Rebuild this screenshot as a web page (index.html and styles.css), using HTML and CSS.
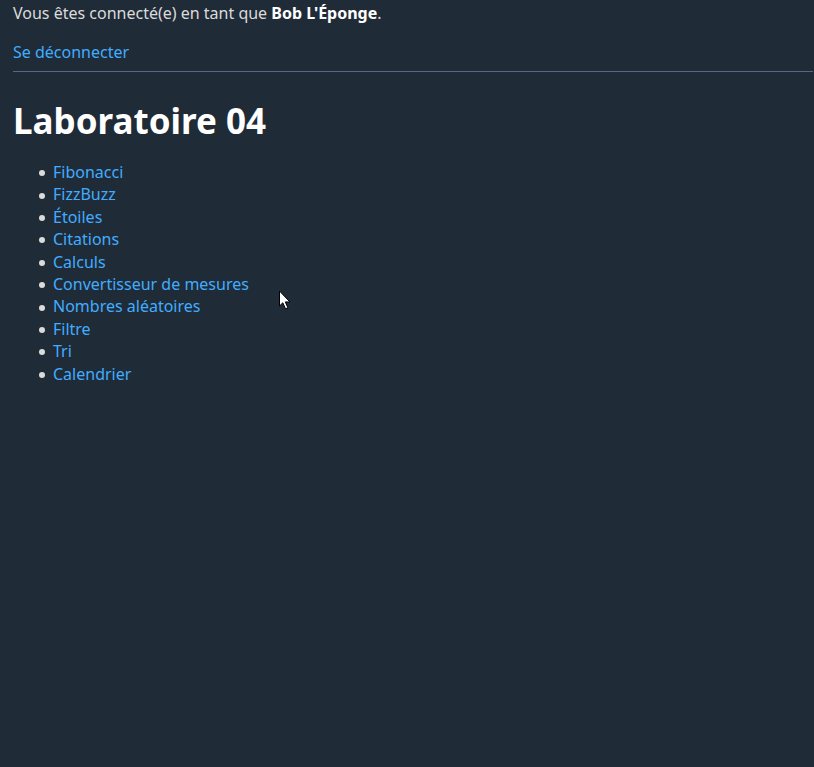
FILE: index.html
```html
<!DOCTYPE html>
<html lang="fr">
<head>
<meta charset="utf-8">
<title>Laboratoire 04</title>
<link rel="stylesheet" href="styles.css">
</head>
<body>
<header class="session">
<p class="user">Vous êtes connecté(e) en tant que <strong>Bob L'Éponge</strong>.</p>
<a href="#">Se déconnecter</a>
</header>
<main>
<h1>Laboratoire 04</h1>
<ul class="exercises">
<li><a href="#">Fibonacci</a></li>
<li><a href="#">FizzBuzz</a></li>
<li><a href="#">Étoiles</a></li>
<li><a href="#">Citations</a></li>
<li><a href="#">Calculs</a></li>
<li><a href="#">Convertisseur de mesures</a></li>
<li><a href="#">Nombres aléatoires</a></li>
<li><a href="#">Filtre</a></li>
<li><a href="#">Tri</a></li>
<li><a href="#">Calendrier</a></li>
</ul>
</main>
<svg class="pointer" width="12" height="20" viewBox="0 0 12 20" aria-hidden="true"><path d="M.5 1v15l3.3-3.2 2.7 6 2.4-1-2.6-5.9h4.6z" fill="#fff" stroke="#000"/></svg>
</body>
</html>
```
FILE: styles.css
```css
body {
  margin: 0;
  padding: 2px 1px 0 13px;
  background: #202b38;
  color: #dbdbdb;
  font: 16px/1.4 "Noto Sans", sans-serif;
}
a {
  color: #41adff;
  text-decoration: none;
}
a:hover {
  text-decoration: underline;
}
strong, h1 {
  color: #fff;
}
.session {
  padding-bottom: 7px;
  border-bottom: 1px solid #526980;
  line-height: 23px;
}
.user {
  margin: 0 0 16px;
}
h1 {
  margin: 24px 0 12px;
  font-size: 35px;
}
.exercises {
  margin: 16px 0;
  padding-left: 26px;
  list-style: none;
}
.exercises li {
  display: flex;
  align-items: center;
  gap: 8px;
}
.exercises li::before {
  content: "";
  width: 6px;
  height: 6px;
  margin-top: 2px;
  border-radius: 50%;
  background: #dbdbdb;
}
.pointer {
  position: absolute;
  left: 279px;
  top: 290px;
}
```
